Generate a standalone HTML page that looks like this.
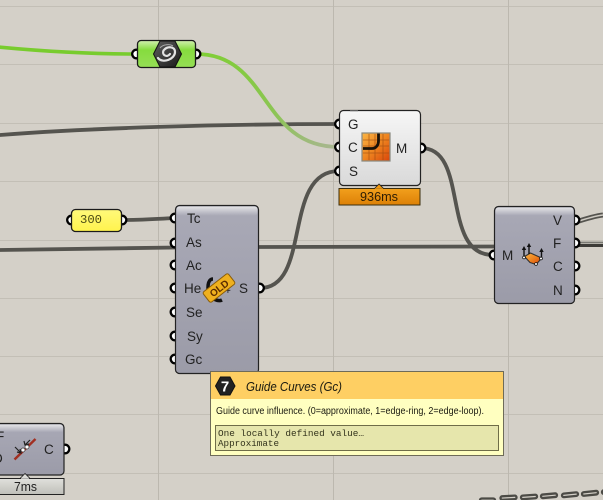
<!DOCTYPE html>
<html><head><meta charset="utf-8"><style>
html,body{margin:0;padding:0;width:603px;height:500px;overflow:hidden;background:#d4d0c8}
svg{display:block;filter:blur(.3px)}
text{font-family:"Liberation Sans",sans-serif}
.l{font-size:13.500px;fill:#222}
</style></head><body>
<svg width="603" height="500" viewBox="0 0 603 500" xmlns="http://www.w3.org/2000/svg">
<defs>
<linearGradient id="gw" gradientUnits="userSpaceOnUse" x1="196" y1="54" x2="339" y2="147">
<stop offset="0" stop-color="#7fcf34"/><stop offset=".55" stop-color="#8bc552"/><stop offset="1" stop-color="#aab594"/></linearGradient>
<linearGradient id="gray" x1="0" y1="0" x2="0" y2="1"><stop offset="0" stop-color="#a9a9b6"/><stop offset="1" stop-color="#9b9ba8"/></linearGradient>
<linearGradient id="top" x1="0" y1="0" x2="0" y2="1"><stop offset="0" stop-color="#e4e4e6"/><stop offset="1" stop-color="#a9a9b6"/></linearGradient>
<linearGradient id="white" x1="0" y1="0" x2="0" y2="1"><stop offset="0" stop-color="#f6f6f6"/><stop offset="1" stop-color="#d9d9d9"/></linearGradient>
<linearGradient id="green" x1="0" y1="0" x2="0" y2="1"><stop offset="0" stop-color="#d2f0b0"/><stop offset=".35" stop-color="#86dc3e"/><stop offset="1" stop-color="#96de56"/></linearGradient>
<linearGradient id="orange" x1="0" y1="0" x2="0" y2="1"><stop offset="0" stop-color="#f2a01c"/><stop offset="1" stop-color="#dc8006"/></linearGradient>
<linearGradient id="silver" x1="0" y1="0" x2="0" y2="1"><stop offset="0" stop-color="#e0e0dc"/><stop offset="1" stop-color="#bfbfb9"/></linearGradient>
<linearGradient id="yel" x1="0" y1="0" x2="0" y2="1"><stop offset="0" stop-color="#fff97a"/><stop offset="1" stop-color="#fff34d"/></linearGradient>
<linearGradient id="ico" x1="0" y1="0" x2="1" y2="1"><stop offset="0" stop-color="#fab545"/><stop offset=".5" stop-color="#ee8520"/><stop offset="1" stop-color="#d8440a"/></linearGradient>
<linearGradient id="hex" x1="0" y1="0" x2="1" y2="1"><stop offset="0" stop-color="#5e5e5e"/><stop offset="1" stop-color="#1a1a1a"/></linearGradient>
</defs>

<!-- grid -->
<g stroke="#c3bfb6" stroke-width="1" fill="none">
<path d="M0 6.500H603M0 64.500H603M0 123.500H603M0 181.500H603M0 240.500H603M0 298.500H603M0 356.500H603M0 414.500H603M0 473.500H603"/>
<path d="M158.500 0V500M333.500 0V500M508.500 0V500" stroke="#bcb8af"/>
</g>

<!-- wires -->
<g fill="none" stroke-linecap="round">
<path d="M-2 47C50 52 90 54 136 54" stroke="#78cc2e" stroke-width="3.500"/>
<path d="M0 135C90 128 220 124 342 124" stroke="#55544f" stroke-width="3.800"/>
<path d="M0 250C60 249 120 248 176 247.500" stroke="#55544f" stroke-width="3.800"/>
<path d="M258 247C340 247 420 247 494 246.500" stroke="#55544f" stroke-width="3.800"/>
<path d="M196 54C270 54 260 147 339 147" stroke="url(#gw)" stroke-width="3.800"/>
<path d="M122 220C140 220 155 219 176 218" stroke="#55544f" stroke-width="3.800"/>
<path d="M260 288C312 288 282 171 339 171" stroke="#55544f" stroke-width="3.800"/>
<path d="M421 148C470 148 440 255 493 255" stroke="#55544f" stroke-width="3.800"/>
<path d="M576 222C585 219 595 216 603 215" stroke="#55544f" stroke-width="5" stroke-linecap="butt"/>
<path d="M576 222C585 219 595 216 603 215" stroke="#cfcbc3" stroke-width="1.500" stroke-linecap="butt"/>
<path d="M576 242.500H603" stroke="#7a7973" stroke-width="1.800"/>
<path d="M576 245.500H603" stroke="#3c3b37" stroke-width="3"/>
</g>
<!-- bottom links -->
<g fill="#d4d0c8" stroke="#4c4b46" stroke-width="2.300">
<rect x="500.500" y="496" width="16" height="3.500" rx="1.700" transform="rotate(-3 508 497.500)"/>
<rect x="521" y="495.200" width="16" height="3.500" rx="1.700" transform="rotate(-4 529 497)"/>
<rect x="541" y="494" width="16" height="3.500" rx="1.700" transform="rotate(-5 549 495.700)"/>
<rect x="562" y="493" width="16" height="3.500" rx="1.700" transform="rotate(-6 570 494.700)"/>
<rect x="582" y="491.600" width="16" height="3.500" rx="1.700" transform="rotate(-6 590 493.300)"/>
<rect x="602" y="489.700" width="16" height="3.500" rx="1.700" transform="rotate(-6 610 491.500)"/>
<rect x="480" y="498.500" width="15" height="4" rx="1.700"/>
</g>

<!-- connectors -->
<g fill="#fff" stroke="#000" stroke-width="2.300">
<circle cx="136.500" cy="54" r="4.300"/><circle cx="196" cy="54" r="4.300"/>
<circle cx="71.500" cy="220" r="4.300"/><circle cx="122" cy="220" r="4.300"/>
<circle cx="339.500" cy="124" r="4.300"/><circle cx="339.500" cy="147" r="4.300"/><circle cx="339.500" cy="171" r="4.300"/><circle cx="421" cy="148" r="4.300"/>
<circle cx="175" cy="218" r="4.300"/><circle cx="175" cy="243" r="4.300"/><circle cx="175" cy="265" r="4.300"/><circle cx="175" cy="288" r="4.300"/><circle cx="175" cy="312" r="4.300"/><circle cx="175" cy="336" r="4.300"/><circle cx="175" cy="359" r="4.300"/>
<circle cx="259.500" cy="288" r="4.300"/>
<circle cx="494" cy="255" r="4.300"/><circle cx="575" cy="220" r="4.300"/><circle cx="575" cy="243" r="4.300"/><circle cx="575" cy="266" r="4.300"/><circle cx="575" cy="290" r="4.300"/>
<circle cx="65" cy="449" r="4.300"/>
</g>

<!-- green component -->
<rect x="137.500" y="40.500" width="58" height="27" rx="3.500" fill="url(#green)" stroke="#1b1b1b" stroke-width="1.300"/>
<path d="M153.500 54L160 41H175L181.500 54L175 67H160Z" fill="url(#hex)" stroke="#111" stroke-width="1"/>
<path d="M158 58C163 64 175 59 175 52C175 46 167 46 163.500 50.500C161.500 55 167 58 170 54" fill="none" stroke="#e2e2e2" stroke-width="2.200" stroke-linecap="round"/>
<path d="M160 48C163 44 170 44 173 46" fill="none" stroke="#aaa" stroke-width="1"/>

<!-- yellow slider -->
<rect x="71.500" y="209.500" width="50" height="22" rx="4" fill="url(#yel)" stroke="#1b1b1b" stroke-width="1.300"/>
<text x="80" y="223" style="font-family:'Liberation Mono',monospace;font-size:12px;fill:#4a4a14" textLength="22" lengthAdjust="spacingAndGlyphs">300</text>

<!-- middle component -->
<rect x="339.500" y="110.500" width="81" height="75" rx="4" fill="url(#white)" stroke="#222" stroke-width="1.200"/>
<path d="M350 111h8" stroke="#999" stroke-width="1"/>
<text class="l" x="348" y="129">G</text><text class="l" x="348" y="152">C</text><text class="l" x="349" y="176">S</text>
<text class="l" x="396" y="153">M</text>
<rect x="362" y="133" width="28" height="28" fill="url(#ico)" stroke="#88887e" stroke-width="1.200"/>
<path d="M363 140H389M363 146H389M363 153H389M369 134V160M375 134V160M383 134V160" stroke="#9c4a10" stroke-width=".8" opacity=".75"/>
<path d="M363 148.500H372C376 148.500 378.500 145 378.500 141V133.500" fill="none" stroke="#1a1208" stroke-width="2.800"/>
<path d="M379 184L374 189H384Z" fill="#f0980f" stroke="#222" stroke-width=".8"/>
<path d="M339 188.500H420V205H339Z" fill="url(#orange)" stroke="#3c3010" stroke-width="1"/>
<path d="M375 189h8" stroke="#f2a01c" stroke-width="1.500"/>
<text x="360" y="201" style="font-size:13px;fill:#2d1d04" textLength="38" lengthAdjust="spacingAndGlyphs">936ms</text>

<!-- left component -->
<rect x="175.500" y="205.500" width="83" height="168" rx="4" fill="url(#gray)" stroke="#222" stroke-width="1.200"/>
<rect x="176.500" y="206.500" width="81" height="9" rx="3" fill="url(#top)"/>
<text class="l" x="187" y="223">Tc</text><text class="l" x="186" y="247">As</text><text class="l" x="186" y="270">Ac</text><text class="l" x="184" y="293">He</text><text class="l" x="186" y="317">Se</text><text class="l" x="187" y="341">Sy</text><text class="l" x="185" y="364">Gc</text>
<text class="l" x="239" y="293">S</text>
<path d="M213 279C207 279 207 290 210 294C212 299 218 302 222 300" fill="none" stroke="#111" stroke-width="3.500"/>
<text x="225" y="294" style="font-size:10px;fill:#111">+</text>
<g transform="rotate(-38 219 288)">
<rect x="203" y="281.500" width="32" height="13" rx="2" fill="#efb01e" stroke="#8a5c08" stroke-width="1"/>
<text x="219" y="291.800" text-anchor="middle" style="font-size:10px;font-weight:bold;fill:#5a2c00">OLD</text>
</g>

<!-- right component -->
<rect x="494.500" y="206.500" width="80" height="97" rx="4" fill="url(#gray)" stroke="#222" stroke-width="1.200"/>
<rect x="495.500" y="207.500" width="78" height="8" rx="3" fill="url(#top)"/>
<text class="l" x="502" y="260">M</text>
<text class="l" x="553" y="225">V</text><text class="l" x="553" y="248">F</text><text class="l" x="553" y="271">C</text><text class="l" x="553" y="295">N</text>
<path d="M524.500 256.500L530.500 253L540.500 257.500V259.500L536 264.500L530 262.500Z" fill="url(#ico)" stroke="#333" stroke-width="1.100" stroke-linejoin="round"/>
<path d="M524 257V248M529 254V245M541.500 259V250" stroke="#111" stroke-width="1.400"/>
<path d="M521.800 250L524 246L526.200 250ZM526.800 247L529 243L531.200 247ZM539.300 252L541.500 248L543.700 252Z" fill="#111"/>
<g fill="#fff" stroke="#111" stroke-width=".7"><circle cx="524" cy="257.500" r="1.400"/><circle cx="541" cy="258.500" r="1.400"/><circle cx="536" cy="264" r="1.400"/></g>

<!-- bottom-left component -->
<path d="M-3 423.500H60a4 4 0 0 1 4 4V471a4 4 0 0 1-4 4H-3Z" fill="url(#gray)" stroke="#222" stroke-width="1.200"/>
<path d="M0 424.500H60a3 3 0 0 1 3 3V432H0Z" fill="url(#top)"/>
<text class="l" x="-4" y="441">F</text><text class="l" x="-7" y="463">D</text>
<text class="l" x="44" y="454">C</text>
<path d="M14.500 459.500L35.500 439" stroke="#a12f22" stroke-width="2.400"/>
<path d="M15 447L20 452M17 452l4 1-1-4M30 440L25 445M24 441l1 4 4-1" stroke="#222" stroke-width="1.200" fill="none"/>
<circle cx="23" cy="450" r="2" fill="#fff" stroke="#333" stroke-width=".7"/><circle cx="27" cy="447" r="2" fill="#fff" stroke="#333" stroke-width=".7"/>
<path d="M25 473.500L20 478.500H30Z" fill="#dcdcd8" stroke="#222" stroke-width=".8"/>
<path d="M-2 478.500H64V494.500H-2Z" fill="url(#silver)" stroke="#222" stroke-width="1"/>
<path d="M21 479h8" stroke="#e0e0dc" stroke-width="1.500"/>
<text x="14" y="491" style="font-size:13px;fill:#222" textLength="23" lengthAdjust="spacingAndGlyphs">7ms</text>

<!-- tooltip -->
<rect x="210.500" y="371.500" width="293" height="84" fill="#ffffc0" stroke="#6e6b58" stroke-width="1"/>
<rect x="211" y="372" width="292" height="27" fill="#fecf63"/>
<path d="M215.500 386L220.500 377H230L235 386L230 395H220.500Z" fill="#222" stroke="#111" stroke-width="1"/>
<text x="225" y="391.500" text-anchor="middle" style="font-size:15px;font-weight:bold;fill:#fff">7</text>
<text x="246" y="391" style="font-size:13px;font-style:italic;fill:#1a1a10" textLength="96" lengthAdjust="spacingAndGlyphs">Guide Curves (Gc)</text>
<text x="216" y="414" style="font-size:10px;fill:#1a1a10" textLength="268" lengthAdjust="spacingAndGlyphs">Guide curve influence. (0=approximate, 1=edge-ring, 2=edge-loop).</text>
<rect x="215.500" y="425.500" width="283" height="25" fill="#e6e6ac" stroke="#6f6d48" stroke-width="1"/>
<text x="218" y="436" style="font-family:'Liberation Mono',monospace;font-size:9px;fill:#33331c" textLength="146" lengthAdjust="spacingAndGlyphs">One locally defined value…</text>
<text x="218" y="446" style="font-family:'Liberation Mono',monospace;font-size:9px;fill:#33331c" textLength="61" lengthAdjust="spacingAndGlyphs">Approximate</text>
</svg>
</body></html>
